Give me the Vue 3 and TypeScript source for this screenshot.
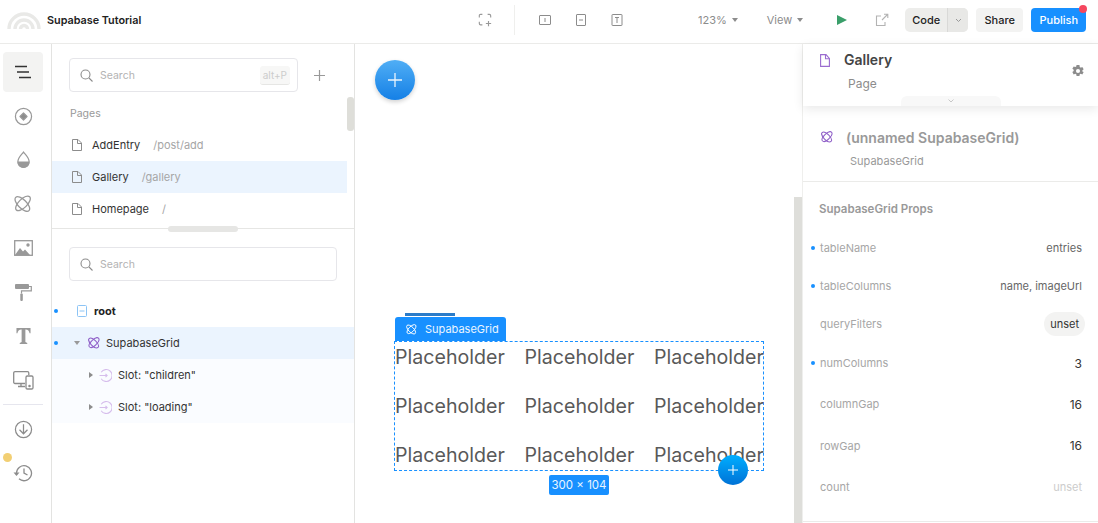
<template>
  <div class="app">
    <header class="topbar">
      <div class="brand">
        <svg class="logo" width="34" height="20" viewBox="0 0 34 20" fill="none" stroke="#e9e9e7" stroke-width="3.4">
          <path d="M2 19a15 15 0 0 1 30 0" />
          <path d="M8 19a9 9 0 0 1 18 0" />
          <path d="M13.500 19a3.500 3.500 0 0 1 7 0" />
        </svg>
        <span class="project">Supabase Tutorial</span>
      </div>
      <div class="tool-center">
        <svg class="tool-icon" width="14" height="14" viewBox="0 0 16 16" fill="none" stroke="#999" stroke-width="1.300">
          <path d="M1.500 5V3a1.500 1.500 0 0 1 1.500-1.500h2M11 1.500h2A1.500 1.500 0 0 1 14.500 3v2M1.500 10v2A1.500 1.500 0 0 0 3 13.500h2" />
          <path d="M12 9v6M9 12h6" />
        </svg>
        <span class="tool-sep"></span>
        <svg class="tool-icon" width="14" height="14" viewBox="0 0 14 14" fill="none" stroke="#8c8c8c">
          <rect x="1.500" y="2.500" width="11" height="9" rx=".5" />
          <path d="M7 5v4" />
        </svg>
        <svg class="tool-icon" width="14" height="14" viewBox="0 0 14 14" fill="none" stroke="#8c8c8c">
          <rect x="2.500" y="1.500" width="9" height="11" rx=".5" />
          <path d="M5 7h4" />
        </svg>
        <svg class="tool-icon" width="14" height="14" viewBox="0 0 14 14" fill="none" stroke="#8c8c8c">
          <rect x="2" y="1.500" width="10" height="11" rx=".5" />
          <path d="M5 4.500h4M7 4.500V10" />
        </svg>
      </div>
      <div class="tool-right">
        <span class="drop zoom-drop">123%<i class="caret"></i></span>
        <span class="drop view-drop">View<i class="caret"></i></span>
        <svg class="play" width="12" height="12" viewBox="0 0 12 12"><path d="M1 1l10 5-10 5z" fill="#3a9f6a" /></svg>
        <svg class="open" width="14" height="14" viewBox="0 0 14 14" fill="none" stroke="#b3b3b3" stroke-width="1.100">
          <path d="M6 3H1.500v9.500h8.500V9" />
          <path d="M7 7l5.500-5.500M9 1.200h3.800V5" />
        </svg>
        <div class="code-btn">
          <span class="code-label">Code</span>
          <span class="code-more">
            <svg width="7" height="5" viewBox="0 0 7 5" fill="none" stroke="#999"><path d="M1 1l2.500 2.500L6 1" /></svg>
          </span>
        </div>
        <button class="share">Share</button>
        <button class="publish">Publish<i class="publish-dot"></i></button>
      </div>
    </header>

    <div class="workspace">
      <nav class="rail">
        <div class="rail-item active">
          <svg width="20" height="14" viewBox="0 0 20 14" stroke="#333" stroke-width="1.300" fill="none">
            <path d="M2 1.500h12M4 7h12M6 12.500h12" />
          </svg>
        </div>
        <div class="rail-item">
          <svg width="19" height="19" viewBox="0 0 20 20" fill="none" stroke="#999" stroke-width="1.300">
            <circle cx="10" cy="10" r="8.500" />
            <path d="M10 6.300L13.700 10 10 13.700 6.300 10z" fill="#8c8c8c" stroke-linejoin="round" />
          </svg>
        </div>
        <div class="rail-item">
          <svg width="15" height="20" viewBox="0 0 16 20" fill="none" stroke="#999" stroke-width="1.300">
            <path d="M8 1.500c2.500 3.500 6 6 6 10.500a6 6 0 0 1-12 0C2 7.500 5.500 5 8 1.500z" />
            <path d="M1.700 11.500h12.600c.3 4-2.700 6.700-6.300 6.700s-6.600-2.700-6.300-6.700z" fill="#999" stroke="none" />
          </svg>
        </div>
        <div class="rail-item">
          <svg width="18" height="18" viewBox="0 0 20 20" fill="none" stroke="#999" stroke-width="1.500">
            <ellipse cx="10" cy="10" rx="5" ry="11" transform="rotate(45 10 10) scale(.95)" />
            <ellipse cx="10" cy="10" rx="5" ry="11" transform="rotate(-45 10 10) scale(.95)" />
          </svg>
        </div>
        <div class="rail-item">
          <svg width="19" height="16" viewBox="0 0 19 16" fill="none">
            <rect x=".7" y=".7" width="17.600" height="14.600" stroke="#999" stroke-width="1.300" />
            <path d="M1 15l5-7 3 3.500 2-2 5 5.500z" fill="#999" />
            <circle cx="14" cy="5" r="1.700" fill="#999" />
          </svg>
        </div>
        <div class="rail-item">
          <svg width="17" height="17" viewBox="0 0 17 17" fill="none">
            <rect x="0" y="0" width="14" height="5" rx="1" fill="#999" />
            <path d="M14 2.500h2.300v4.300H6.500v2.700" stroke="#999" stroke-width="1.200" />
            <rect x="5.300" y="9.500" width="2.500" height="7.500" rx="1" fill="#999" />
          </svg>
        </div>
        <div class="rail-item">
          <svg width="15" height="16" viewBox="0 0 16 17" fill="#999">
            <path d="M.5 0h15v5.500h-1C14 3 13 1.500 10 1.500V15l2 1v1H4v-1l2-1V1.500C3 1.500 2 3 1.500 5.500h-1z" />
          </svg>
        </div>
        <div class="rail-item">
          <svg width="21" height="19" viewBox="0 0 21 19" fill="none" stroke="#8c8c8c" stroke-width="1.300">
            <path d="M12 12.500H2a1.300 1.300 0 0 1-1.300-1.300V2A1.300 1.300 0 0 1 2 .7h12.500A1.300 1.300 0 0 1 15.800 2v2" />
            <path d="M5 15.500h7M8 12.500v3" />
            <rect x="13" y="5" width="7" height="13" rx="1.300" />
            <circle cx="16.500" cy="15" r=".6" fill="#8c8c8c" />
          </svg>
        </div>
        <div class="rail-line"></div>
        <div class="rail-item lower">
          <svg width="19" height="19" viewBox="0 0 20 20" fill="none" stroke="#8c8c8c" stroke-width="1.300">
            <circle cx="10" cy="10" r="8.500" />
            <path d="M10 4.500v10M5.800 10.300l4.200 4.200 4.200-4.200" />
          </svg>
        </div>
        <div class="rail-item lower history">
          <i class="history-dot"></i>
          <svg width="20" height="18" viewBox="0 0 20 18" fill="none" stroke="#8c8c8c" stroke-width="1.300">
            <path d="M3.500 9A7.500 7.500 0 1 1 6 14.800" />
            <path d="M11 4.500V9l3.500 2" />
            <path d="M.5 8.500h6L3.500 12z" fill="#8c8c8c" stroke="none" />
          </svg>
        </div>
      </nav>

      <aside class="explorer">
        <section class="pages">
          <div class="search-row">
            <label class="search short">
              <svg width="13" height="13" viewBox="0 0 13 13" fill="none" stroke="#8c8c8c" stroke-width="1.100"><circle cx="5.500" cy="5.500" r="4.500" /><path d="M9 9l3.500 3.500" /></svg>
              <span class="placeholder">Search</span>
              <kbd>alt+P</kbd>
            </label>
            <svg class="add-page" width="11" height="11" viewBox="0 0 11 11" stroke="#999" stroke-width="1.200"><path d="M5.500 0v11M0 5.500h11" /></svg>
          </div>
          <div class="pages-title">Pages</div>
          <div v-for="page in pages" :key="page.name" class="page-row" :class="{ selected: page.selected }">
            <svg width="10" height="12" viewBox="0 0 10 12" fill="none" stroke="#8c8c8c">
              <path d="M.5.500h5.500L9.500 4v7.500h-9z" /><path d="M5.500.500V4.500h4" />
            </svg>
            <span class="page-name">{{ page.name }}</span>
            <span class="page-path">{{ page.path }}</span>
          </div>
          <i class="thumb-v"></i>
          <i class="thumb-h"></i>
        </section>

        <section class="tree">
          <label class="search wide">
            <svg width="13" height="13" viewBox="0 0 13 13" fill="none" stroke="#8c8c8c" stroke-width="1.100"><circle cx="5.500" cy="5.500" r="4.500" /><path d="M9 9l3.500 3.500" /></svg>
            <span class="placeholder">Search</span>
          </label>
          <div class="tree-rows">
            <div class="tree-row root-row">
              <i class="mark"></i>
              <svg width="10" height="12" viewBox="0 0 10 12" fill="none" stroke="#8cc4f5"><rect x=".5" y=".5" width="9" height="11" rx="1" /><path d="M2.500 6h5" /></svg>
              <span class="root-label">root</span>
            </div>
            <div class="tree-row grid-row">
              <i class="mark"></i>
              <i class="arrow-down"></i>
              <svg width="12" height="12" viewBox="0 0 20 20" fill="none" stroke="#8f5fc8" stroke-width="1.800">
                <ellipse cx="10" cy="10" rx="5" ry="11" transform="rotate(45 10 10) scale(.95)" />
                <ellipse cx="10" cy="10" rx="5" ry="11" transform="rotate(-45 10 10) scale(.95)" />
              </svg>
              <span>SupabaseGrid</span>
            </div>
            <div v-for="slot in slots" :key="slot" class="tree-row slot-row">
              <i class="arrow-right"></i>
              <svg width="13" height="13" viewBox="0 0 12 12" fill="none" stroke="#d6bdec">
                <path d="M2 3a5.500 5.500 0 1 1 0 6" /><path d="M.5 6h7M6 4.500L7.500 6 6 7.500" />
              </svg>
              <span>Slot: "{{ slot }}"</span>
            </div>
          </div>
        </section>
      </aside>

      <main class="canvas">
        <button class="fab big">
          <svg width="16" height="16" viewBox="0 0 16 16" stroke="#fff" stroke-width="1.300" opacity=".9"><path d="M8 1v14M1 8h14" /></svg>
        </button>
        <i class="canvas-scroll"></i>
        <div class="selection">
          <i class="tab-notch"></i>
          <div class="sel-tag">
            <svg width="11" height="11" viewBox="0 0 20 20" fill="none" stroke="#fff" stroke-width="1.800">
              <ellipse cx="10" cy="10" rx="5" ry="11" transform="rotate(45 10 10) scale(.95)" />
              <ellipse cx="10" cy="10" rx="5" ry="11" transform="rotate(-45 10 10) scale(.95)" />
            </svg>
            <span>SupabaseGrid</span>
          </div>
          <div class="grid-box">
            <span v-for="n in 9" :key="n" class="cell">Placeholder</span>
            <button class="fab small">
              <svg width="10" height="10" viewBox="0 0 10 10" stroke="#fff"><path d="M5 0v10M0 5h10" /></svg>
            </button>
          </div>
          <div class="size-wrap"><span class="size-tag">300 × 104</span></div>
        </div>
      </main>

      <aside class="inspector">
        <div class="insp-head">
          <svg class="insp-page" width="10" height="13" viewBox="0 0 10 13" fill="none" stroke="#9a6ccf" stroke-width="1.100">
            <path d="M.6.600h5.400L9.400 4.500v7.900H.6z" /><path d="M5.500.600V4.800h3.900" />
          </svg>
          <div class="insp-titles">
            <div class="insp-name">Gallery</div>
            <div class="insp-type">Page</div>
          </div>
          <svg class="gear" width="14" height="14" viewBox="0 0 24 24" fill="#8c8c8c">
            <path d="M19.400 13a7.500 7.500 0 0 0 0-2l2.300-1.800-2.300-4-2.700 1.100a8 8 0 0 0-1.700-1L14.500 1.500h-5L9 4.300a8 8 0 0 0-1.700 1L4.600 4.200l-2.300 4L4.600 10a7.500 7.500 0 0 0 0 2l-2.300 1.800 2.300 4 2.700-1.100a8 8 0 0 0 1.700 1l.5 2.800h5l.5-2.800a8 8 0 0 0 1.700-1l2.700 1.100 2.300-4zM12 15.500a3.500 3.500 0 1 1 0-7 3.500 3.500 0 0 1 0 7z" />
          </svg>
          <div class="collapse-tab">
            <svg width="6" height="4" viewBox="0 0 6 4" fill="none" stroke="#bbb" stroke-width=".8"><path d="M.5.500L3 3 5.500.5" /></svg>
          </div>
        </div>
        <div class="element-head">
          <div class="element-title">
            <svg width="12" height="12" viewBox="0 0 20 20" fill="none" stroke="#8f5fc8" stroke-width="1.800">
              <ellipse cx="10" cy="10" rx="5" ry="11" transform="rotate(45 10 10) scale(.95)" />
              <ellipse cx="10" cy="10" rx="5" ry="11" transform="rotate(-45 10 10) scale(.95)" />
            </svg>
            <span>(unnamed SupabaseGrid)</span>
          </div>
          <div class="element-type">SupabaseGrid</div>
        </div>
        <section class="props">
          <h3>SupabaseGrid Props</h3>
          <div v-for="prop in props" :key="prop.name" class="prop-row" :style="{ height: prop.h + 'px' }">
            <i v-if="prop.marked" class="prop-mark"></i>
            <span class="prop-name">{{ prop.name }}</span>
            <span class="prop-value" :class="prop.kind">{{ prop.value }}</span>
          </div>
        </section>
      </aside>
    </div>
  </div>
</template>

<script setup lang="ts">
interface PageEntry {
  name: string
  path: string
  selected?: boolean
}

interface PropEntry {
  name: string
  value: string
  h: number
  marked?: boolean
  kind?: 'pill' | 'dark' | 'faint'
}

const pages: PageEntry[] = [
  { name: 'AddEntry', path: '/post/add' },
  { name: 'Gallery', path: '/gallery', selected: true },
  { name: 'Homepage', path: '/' }
]

const slots = ['children', 'loading']

const props: PropEntry[] = [
  { name: 'tableName', value: 'entries', h: 38, marked: true },
  { name: 'tableColumns', value: 'name, imageUrl', h: 38, marked: true },
  { name: 'queryFilters', value: 'unset', h: 38, kind: 'pill' },
  { name: 'numColumns', value: '3', h: 40, marked: true, kind: 'dark' },
  { name: 'columnGap', value: '16', h: 42, kind: 'dark' },
  { name: 'rowGap', value: '16', h: 41, kind: 'dark' },
  { name: 'count', value: 'unset', h: 42, kind: 'faint' }
]
</script>

<style>
html,
body {
  margin: 0;
  overflow: hidden;
}
</style>

<style scoped>
.app {
  width: 1098px;
  height: 523px;
  display: flex;
  flex-direction: column;
  font-family: Inter, "Liberation Sans", sans-serif;
  font-size: 11px;
  color: #333;
  background: #fff;
  overflow: hidden;
}

/* top bar */
.topbar {
  height: 43px;
  flex: none;
  display: flex;
  align-items: center;
  border-bottom: 1px solid #ebebe9;
}
.brand {
  display: flex;
  align-items: center;
  width: 478px;
  flex: none;
  padding-left: 5px;
  padding-bottom: 3px;
  box-sizing: border-box;
}
.logo {
  margin: 0 6px 0 2px;
  flex: none;
}
.project {
  font-size: 10.800px;
  font-weight: 600;
  color: #222;
}
.tool-center {
  display: flex;
  align-items: center;
  flex: none;
  padding-bottom: 3px;
}
.tool-icon {
  flex: none;
}
.tool-sep {
  width: 1px;
  height: 30px;
  background: #efefed;
  margin: 0 23px 0 22px;
}
.tool-center svg:nth-of-type(2),
.tool-center svg:nth-of-type(3) {
  margin-right: 22px;
}
.tool-right {
  display: flex;
  align-items: center;
  flex: 1;
  height: 100%;
  padding-bottom: 3px;
  box-sizing: border-box;
}
.drop {
  display: inline-flex;
  align-items: center;
  color: #8c8c8c;
  font-size: 11px;
}
.zoom-drop {
  margin-left: 74px;
}
.view-drop {
  margin-left: 29px;
}
.caret {
  display: inline-block;
  margin-left: 5px;
  border: 3.500px solid transparent;
  border-top: 4px solid #8c8c8c;
  border-bottom: 0;
}
.play {
  margin-left: 33px;
}
.open {
  margin-left: 27px;
}
.code-btn {
  margin-left: 16px;
  height: 24px;
  width: 63px;
  display: flex;
  align-items: stretch;
  border-radius: 5px;
  background: #ededeb;
  overflow: hidden;
}
.code-label {
  width: 42px;
  display: flex;
  align-items: center;
  justify-content: center;
  font-size: 11px;
  font-weight: 500;
  color: #222;
}
.code-more {
  flex: 1;
  display: flex;
  align-items: center;
  justify-content: center;
  border-left: 1px solid #d9d9d7;
  background: #e8e8e6;
}
.share,
.publish {
  border: 0;
  height: 24px;
  border-radius: 4px;
  font-family: inherit;
  font-size: 11px;
  font-weight: 500;
  padding: 0;
  flex: none;
}
.share {
  margin-left: 8px;
  width: 47px;
  background: #f3f3f2;
  color: #222;
}
.publish {
  margin-left: 8px;
  width: 55px;
  background: #1890ff;
  color: #fff;
  position: relative;
}
.publish-dot {
  position: absolute;
  top: -3px;
  right: -1px;
  width: 8px;
  height: 8px;
  border-radius: 50%;
  background: #f5475f;
}

/* body */
.workspace {
  flex: 1;
  min-height: 0;
  display: flex;
}
.rail {
  flex: none;
  border-right: 1px solid #e3e3e1;
  padding: 8px 8px 0 3px;
  width: 40px;
  display: flex;
  flex-direction: column;
}
.rail-item {
  height: 40px;
  width: 40px;
  margin-bottom: 4px;
  display: flex;
  align-items: center;
  justify-content: center;
  border-radius: 4px;
  flex: none;
  position: relative;
}
.rail-item.active {
  background: #f3f3f2;
}
.rail-line {
  height: 1px;
  background: #e6e6ee;
  margin: 0 0 4px;
  flex: none;
}
.history-dot {
  position: absolute;
  left: 0;
  top: 0;
  width: 9px;
  height: 9px;
  border-radius: 50%;
  background: #f2cf73;
}

/* left panel */
.explorer {
  width: 302px;
  flex: none;
  border-right: 1px solid #e3e3e1;
  display: flex;
  flex-direction: column;
}
.pages {
  height: 185px;
  flex: none;
  box-sizing: border-box;
  border-bottom: 1px solid #e6e6e4;
  position: relative;
}
.search-row {
  display: flex;
  align-items: center;
  padding: 14px 0 0 17px;
}
.search {
  display: flex;
  align-items: center;
  height: 32px;
  border: 1px solid #e6e6ea;
  border-radius: 4px;
  padding-left: 10px;
  color: #b3b3b3;
}
.search.short {
  width: 217px;
}
.search.wide {
  width: 256px;
  margin: 18px 0 0 17px;
}
.placeholder {
  margin-left: 7px;
  font-size: 10.500px;
  color: #b3b3b3;
}
kbd {
  margin-left: auto;
  margin-right: 7px;
  height: 18px;
  padding: 0 3px;
  line-height: 18px;
  font-family: inherit;
  font-size: 10px;
  color: #ccc;
  background: #f7f7f6;
  border-bottom: 1px solid #e6e6e4;
  border-radius: 3px;
}
.add-page {
  margin-left: 16px;
}
.pages-title {
  margin: 15px 0 8px 18px;
  height: 14px;
  line-height: 14px;
  font-size: 10.500px;
  color: #999;
}
.page-row {
  height: 32px;
  width: 295px;
  display: flex;
  align-items: center;
  padding-left: 20px;
  box-sizing: border-box;
}
.page-row.selected {
  background: #ebf4fe;
}
.page-name {
  margin-left: 10px;
  color: #333;
}
.page-path {
  margin-left: 13px;
  color: #a6a6a6;
}
.thumb-v {
  position: absolute;
  right: 0;
  top: 53px;
  width: 7px;
  height: 34px;
  border-radius: 3px;
  background: #deded9;
}
.thumb-h {
  position: absolute;
  left: 116px;
  bottom: -4px;
  width: 70px;
  height: 6px;
  border-radius: 3px;
  background: #e6e6e4;
}
.tree {
  flex: 1;
}
.tree-rows {
  margin-top: 14px;
}
.tree-row {
  height: 32px;
  display: flex;
  align-items: center;
  position: relative;
}
.mark {
  position: absolute;
  left: 2px;
  top: 14px;
  width: 4px;
  height: 4px;
  border-radius: 50%;
  background: #1890ff;
}
.root-row {
  padding-left: 25px;
}
.root-label {
  margin-left: 7px;
  font-weight: 700;
  color: #222;
}
.grid-row {
  background: #ebf4fe;
  padding-left: 23px;
}
.grid-row svg {
  margin: 0 6px 0 8px;
}
.arrow-down {
  border: 3.500px solid transparent;
  border-top: 4px solid #999;
  border-bottom: 0;
  margin-left: -1px;
}
.arrow-right {
  border: 3.500px solid transparent;
  border-left: 4px solid #8c8c8c;
  border-right: 0;
}
.slot-row {
  background: #fafcff;
  padding-left: 37px;
}
.slot-row svg {
  margin: 0 6px 0 6px;
}

/* canvas */
.canvas {
  flex: 1;
  position: relative;
  overflow: hidden;
}
.fab {
  position: absolute;
  border: 0;
  padding: 0;
  border-radius: 50%;
  display: flex;
  align-items: center;
  justify-content: center;
}
.fab.big {
  left: 20px;
  top: 16px;
  width: 40px;
  height: 40px;
  background: linear-gradient(#50aef5, #1580e6);
  box-shadow: 0 2px 4px rgba(0, 0, 0, 0.18);
}
.fab.small {
  right: 15px;
  bottom: -15px;
  width: 30px;
  height: 30px;
  background: linear-gradient(#00aeff, #0072d6);
}
.canvas-scroll {
  position: absolute;
  right: 0;
  top: 153px;
  bottom: 0;
  width: 8px;
  background: #dededa;
}
.selection {
  position: absolute;
  left: 39px;
  top: 269px;
  width: 370px;
}
.tab-notch {
  position: absolute;
  left: 11px;
  top: 0;
  width: 50px;
  height: 3px;
  background: #2b7cc9;
}
.sel-tag {
  margin: 4px 0 0 1px;
  width: 111px;
  height: 24px;
  background: #1890ff;
  border-radius: 3px 3px 0 0;
  display: flex;
  align-items: center;
  color: #eaf5ff;
  font-size: 11px;
  box-sizing: border-box;
  padding-left: 11px;
}
.sel-tag span {
  margin-left: 8px;
}
.grid-box {
  position: relative;
  height: 130px;
  border: 1px dashed #1890ff;
  padding-top: 1px;
  box-sizing: border-box;
  display: grid;
  grid-template-columns: repeat(3, 110px);
  column-gap: 19.500px;
  row-gap: 20px;
  align-content: start;
}
.cell {
  height: 29px;
  line-height: 29px;
  font-size: 19.600px;
  color: #595959;
  white-space: nowrap;
}
.size-wrap {
  display: flex;
  justify-content: center;
  margin-top: 4px;
}
.size-tag {
  width: 60px;
  height: 20px;
  line-height: 20px;
  text-align: center;
  border-radius: 2px;
  background: #1890ff;
  color: #eaf5ff;
  font-size: 11.500px;
}

/* right panel */
.inspector {
  width: 296px;
  flex: none;
  border-left: 1px solid #efefed;
  box-sizing: border-box;
  display: flex;
  flex-direction: column;
}
.insp-head {
  height: 62px;
  flex: none;
  display: flex;
  position: relative;
  box-shadow: 0 3px 10px rgba(0, 0, 0, 0.09);
}
.insp-page {
  margin: 10px 0 0 17px;
  flex: none;
}
.insp-titles {
  margin-left: 14px;
}
.insp-name {
  font-size: 14px;
  font-weight: 600;
  color: #444;
  margin-top: 7px;
  line-height: 18px;
}
.insp-type {
  margin: 7px 0 0 4px;
  font-size: 12px;
  line-height: 16px;
  color: #8c8c8c;
}
.gear {
  position: absolute;
  right: 13px;
  top: 20px;
}
.collapse-tab {
  position: absolute;
  left: 98px;
  bottom: 0;
  width: 100px;
  height: 10px;
  border-radius: 6px 6px 0 0;
  background: #f8f8f8;
  display: flex;
  align-items: center;
  justify-content: center;
}
.element-head {
  height: 76px;
  flex: none;
  border-bottom: 1px solid #ebebe9;
  box-sizing: border-box;
}
.element-title {
  display: flex;
  align-items: center;
  margin: 21px 0 0 18px;
  height: 20px;
  font-size: 14px;
  font-weight: 600;
  color: #999;
}
.element-title span {
  margin-left: 13px;
}
.element-type {
  margin: 7px 0 0 47px;
  font-size: 11px;
  color: #999;
}
.props {
  flex: 1;
  position: relative;
  border-bottom: 1px solid #ebebe9;
  margin-bottom: 1px;
}
.props h3 {
  margin: 19px 0 12px 16px;
  font-size: 11.500px;
  line-height: 16px;
  font-weight: 600;
  color: #999;
}
.prop-row {
  display: flex;
  align-items: center;
  justify-content: space-between;
  padding: 0 16px 0 17px;
  position: relative;
}
.prop-mark {
  position: absolute;
  left: 8px;
  top: 50%;
  margin-top: -2px;
  width: 4px;
  height: 4px;
  border-radius: 50%;
  background: #1890ff;
}
.prop-name {
  color: #a6a6a6;
  font-size: 11px;
}
.prop-value {
  color: #666;
  font-size: 11px;
}
.prop-value.dark {
  color: #333;
  font-size: 12px;
}
.prop-value.faint {
  color: #ccc;
}
.prop-value.pill {
  color: #333;
  background: #f3f3f2;
  border-radius: 12px;
  padding: 0 6px;
  height: 24px;
  line-height: 24px;
  margin-right: -3px;
}
</style>
